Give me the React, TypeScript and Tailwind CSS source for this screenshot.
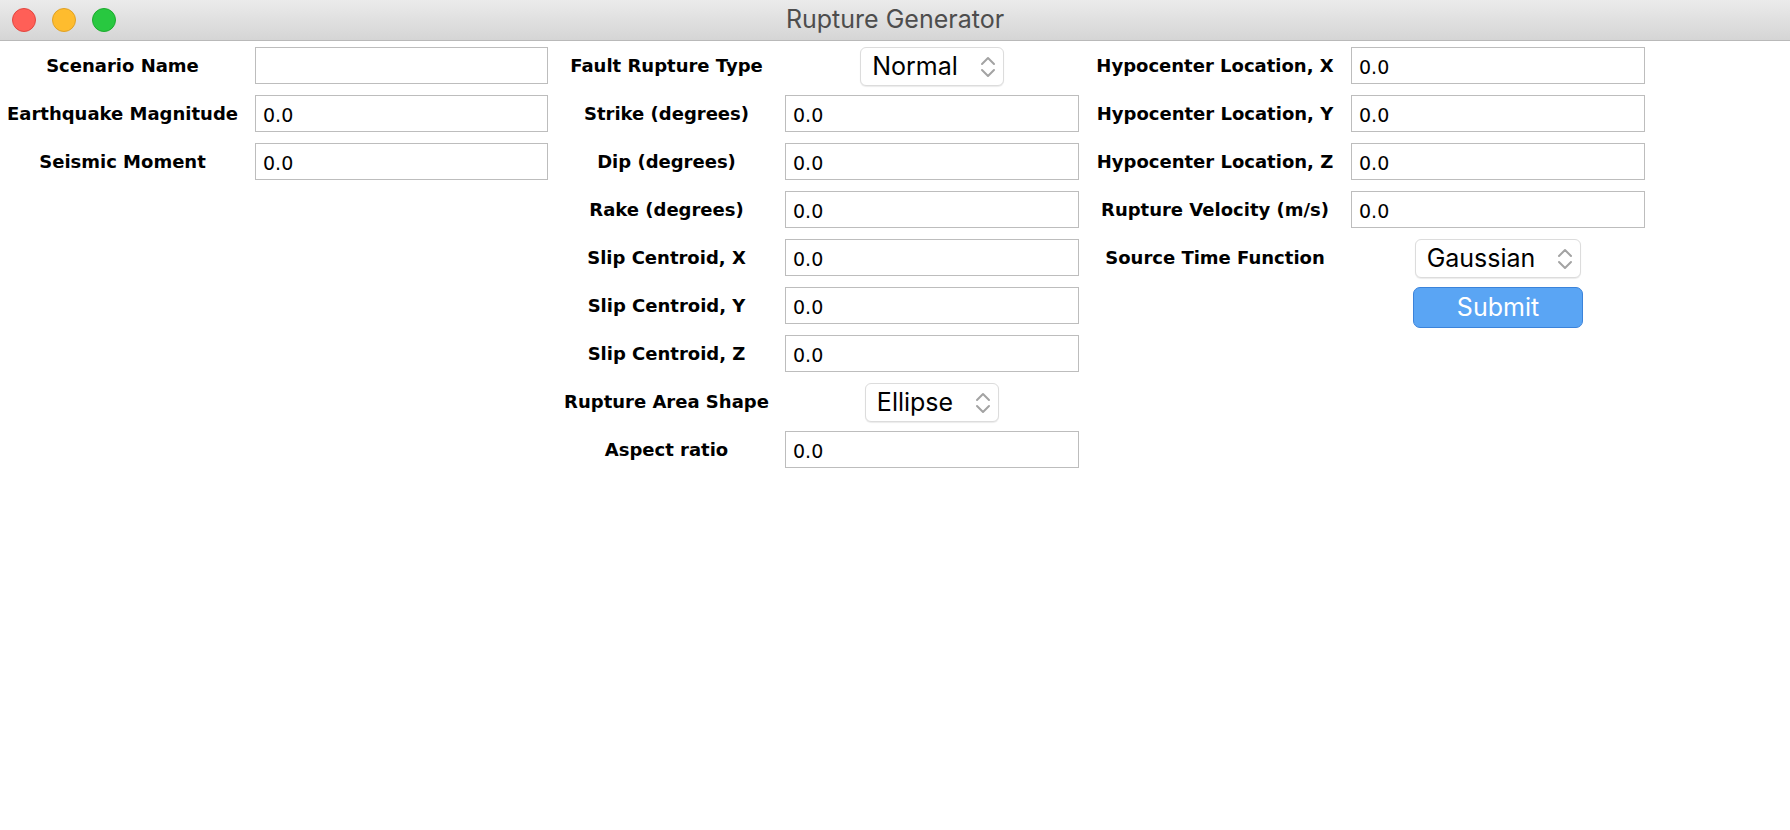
import React from "react";

type Cell =
  | { kind: "input"; value: string }
  | { kind: "select"; value: string }
  | { kind: "button"; value: string }
  | { kind: "empty" };

type Row = { label?: string; cell: Cell };

// three label/field columns, laid out row by row in one grid
const leftRows: Row[] = [
  { label: "Scenario Name", cell: { kind: "input", value: "" } },
  { label: "Earthquake Magnitude", cell: { kind: "input", value: "0.0" } },
  { label: "Seismic Moment", cell: { kind: "input", value: "0.0" } },
];

const midRows: Row[] = [
  { label: "Fault Rupture Type", cell: { kind: "select", value: "Normal" } },
  { label: "Strike (degrees)", cell: { kind: "input", value: "0.0" } },
  { label: "Dip (degrees)", cell: { kind: "input", value: "0.0" } },
  { label: "Rake (degrees)", cell: { kind: "input", value: "0.0" } },
  { label: "Slip Centroid, X", cell: { kind: "input", value: "0.0" } },
  { label: "Slip Centroid, Y", cell: { kind: "input", value: "0.0" } },
  { label: "Slip Centroid, Z", cell: { kind: "input", value: "0.0" } },
  { label: "Rupture Area Shape", cell: { kind: "select", value: "Ellipse" } },
  { label: "Aspect ratio", cell: { kind: "input", value: "0.0" } },
];

const rightRows: Row[] = [
  { label: "Hypocenter Location, X", cell: { kind: "input", value: "0.0" } },
  { label: "Hypocenter Location, Y", cell: { kind: "input", value: "0.0" } },
  { label: "Hypocenter Location, Z", cell: { kind: "input", value: "0.0" } },
  { label: "Rupture Velocity (m/s)", cell: { kind: "input", value: "0.0" } },
  { label: "Source Time Function", cell: { kind: "select", value: "Gaussian" } },
  { cell: { kind: "button", value: "Submit" } },
];

function Chevrons() {
  return (
    <svg width="16" height="22" viewBox="0 0 16 22" fill="none" stroke="#a3a3a3" strokeWidth="2" strokeLinecap="round" strokeLinejoin="round">
      <path d="M2 8 L8 2 L14 8" />
      <path d="M2 14 L8 20 L14 14" />
    </svg>
  );
}

function Field({ cell }: { cell: Cell }) {
  if (cell.kind === "input") {
    return (
      <input
        readOnly
        value={cell.value}
        className="w-full h-[37px] border border-[#bdbdbd] bg-white px-[7px] pt-[3px] font-['DejaVu_Sans',sans-serif] text-[19px] text-black outline-none"
      />
    );
  }
  if (cell.kind === "select") {
    return (
      <div className="justify-self-center flex items-center h-[39px] pl-[11px] pr-[7px] gap-[22px] bg-white border border-[#dcdcdc] rounded-[6px] shadow-[0_1px_1px_rgba(0,0,0,0.08)]">
        <span className="text-[25px] text-black leading-none">{cell.value}</span>
        <Chevrons />
      </div>
    );
  }
  if (cell.kind === "button") {
    return (
      <button className="justify-self-center self-start w-[170px] h-[41px] bg-[#5aa5f4] border border-[#3b83da] rounded-[7px] text-white text-[25px] leading-none">
        {cell.value}
      </button>
    );
  }
  return <div />;
}

function Label({ text, extra }: { text?: string; extra?: string }) {
  return (
    <div className={`flex items-center justify-center font-['DejaVu_Sans',sans-serif] text-[18px] font-bold text-black whitespace-nowrap ${extra ?? ""}`}>
      {text ?? ""}
    </div>
  );
}

export default function App() {
  const rowCount = midRows.length;
  const cells: React.ReactNode[] = [];
  for (let i = 0; i < rowCount; i++) {
    const l = leftRows[i];
    const m = midRows[i];
    const r = rightRows[i];
    cells.push(<Label key={`l${i}`} text={l?.label} extra="pr-[10px]" />);
    cells.push(l ? <Field key={`lf${i}`} cell={l.cell} /> : <div key={`lf${i}`} />);
    cells.push(<Label key={`m${i}`} text={m?.label} />);
    cells.push(m ? <Field key={`mf${i}`} cell={m.cell} /> : <div key={`mf${i}`} />);
    cells.push(<Label key={`r${i}`} text={r?.label} />);
    cells.push(r ? <Field key={`rf${i}`} cell={r.cell} /> : <div key={`rf${i}`} />);
  }

  return (
    <div className="w-[1790px] h-[830px] bg-white overflow-hidden font-['Inter',sans-serif]">
      {/* title bar */}
      <div className="relative h-[41px] flex items-center justify-center bg-gradient-to-b from-[#ebebeb] to-[#d5d5d5] border-b border-[#b9b9b9]">
        <div className="absolute left-[12px] top-[8px] flex gap-[16px]">
          <span className="w-[24px] h-[24px] rounded-full bg-[#ff5f57] border border-[#e2463f]" />
          <span className="w-[24px] h-[24px] rounded-full bg-[#febc2e] border border-[#e0a125]" />
          <span className="w-[24px] h-[24px] rounded-full bg-[#28c840] border border-[#1cab2d]" />
        </div>
        <span className="text-[25px] text-[#4d4d4d]">Rupture Generator</span>
      </div>

      {/* form */}
      <div className="pt-[6px] grid grid-cols-[255px_293px_237px_294px_272px_294px] auto-rows-[37px] gap-y-[11px]">
        {cells}
      </div>
    </div>
  );
}
